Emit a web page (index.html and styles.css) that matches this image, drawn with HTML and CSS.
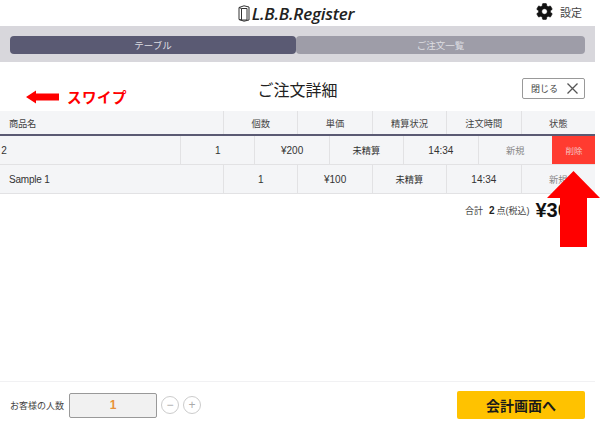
FILE: index.html
```html
<!DOCTYPE html>
<html lang="ja">

<head>
    <meta charset="UTF-8">
    <meta name="viewport" content="width=device-width, initial-scale=1.0">
    <title>ご注文詳細</title>
    <link rel="stylesheet" href="styles.css">
</head>

<body>
    <div class="page">
        <header class="top-bar">
            <div class="logo">
                <svg class="logo-icon" width="12" height="17" viewBox="0 0 12 17" fill="none" stroke="#333" stroke-width="1">
                    <path d="M1 2.5 L6 0.8 L11 2 V15 L6 16.2 L1 14.5 Z" />
                    <path d="M3.5 3.5 H9 V15 H3.5 Z" />
                    <path d="M1 2.5 L3.5 3.5 M1 14.5 L3.5 15" />
                </svg>
                <span>L.B.B.Register</span>
            </div>
            <div class="settings">
                <svg width="19" height="19" viewBox="0 0 24 24" fill="#111" stroke="#111" stroke-width="0.8">
                    <path d="M19.43 12.98c.04-.32.07-.64.07-.98s-.03-.66-.07-.98l2.11-1.65c.19-.15.24-.42.12-.64l-2-3.46c-.12-.22-.39-.3-.61-.22l-2.49 1c-.52-.4-1.08-.73-1.69-.98l-.38-2.65C14.46 2.18 14.25 2 14 2h-4c-.25 0-.46.18-.49.42l-.38 2.65c-.61.25-1.17.59-1.69.98l-2.49-1c-.23-.09-.49 0-.61.22l-2 3.46c-.13.22-.07.49.12.64l2.11 1.65c-.04.32-.07.65-.07.98s.03.66.07.98l-2.11 1.65c-.19.15-.24.42-.12.64l2 3.46c.12.22.39.3.61.22l2.49-1c.52.4 1.08.73 1.69.98l.38 2.65c.03.24.24.42.49.42h4c.25 0 .46-.18.49-.42l.38-2.65c.61-.25 1.17-.59 1.69-.98l2.49 1c.23.09.49 0 .61-.22l2-3.46c.12-.22.07-.49-.12-.64l-2.11-1.65zM12 15.5c-1.93 0-3.5-1.57-3.5-3.5s1.57-3.5 3.5-3.5 3.5 1.57 3.5 3.5-1.57 3.5-3.5 3.5z" />
                </svg>
                <span>設定</span>
            </div>
        </header>

        <nav class="tabs">
            <div class="tab tab-active">テーブル</div>
            <div class="tab">ご注文一覧</div>
        </nav>

        <section class="detail-head">
            <h1 class="detail-title">ご注文詳細</h1>
            <button class="close-btn">
                <span>閉じる</span>
                <svg width="11" height="11" viewBox="0 0 11 11" stroke="#555" stroke-width="1.3" fill="none">
                    <path d="M0.5 0.5 L10.5 10.5 M10.5 0.5 L0.5 10.5" />
                </svg>
            </button>
        </section>

        <div class="order-table">
            <div class="row row-head">
                <div class="cell cell-name">商品名</div>
                <div class="cell">個数</div>
                <div class="cell">単価</div>
                <div class="cell">精算状況</div>
                <div class="cell">注文時間</div>
                <div class="cell">状態</div>
            </div>
            <div class="row row-swiped">
                <div class="cell cell-name">Sample 2</div>
                <div class="cell">1</div>
                <div class="cell">¥200</div>
                <div class="cell cell-ja">未精算</div>
                <div class="cell">14:34</div>
                <div class="cell cell-ja cell-status">新規</div>
                <div class="cell cell-delete">削除</div>
            </div>
            <div class="row">
                <div class="cell cell-name">Sample 1</div>
                <div class="cell">1</div>
                <div class="cell">¥100</div>
                <div class="cell cell-ja">未精算</div>
                <div class="cell">14:34</div>
                <div class="cell cell-ja cell-status">新規</div>
            </div>
        </div>

        <div class="total">
            <span class="total-label">合計</span>
            <b class="total-count">2</b>
            <span class="total-label">点(税込)</span>
            <b class="total-price">¥300</b>
        </div>

        <footer class="bottom-bar">
            <div class="guests">
                <span class="guests-label">お客様の人数</span>
                <div class="guests-input">1</div>
                <button class="round-btn">−</button>
                <button class="round-btn">+</button>
            </div>
            <button class="pay-btn">会計画面へ</button>
        </footer>
    </div>

    <!-- 注釈 -->
    <div class="swipe-note">
        <svg width="33" height="14" viewBox="0 0 33 14" fill="#f00">
            <path d="M0 7 L10 0.5 V3.5 H33 V10.5 H10 V13.5 Z" />
        </svg>
        <span>スワイプ</span>
    </div>
    <svg class="up-arrow" width="53" height="77" viewBox="0 0 53 77" fill="#f00">
        <path d="M26.5 0 L53 27 H40 V76 H13 V27 H0 Z" />
    </svg>
</body>

</html>
```

FILE: styles.css
```css
html,
body {
    margin: 0;
    padding: 0;
    height: 100%;
    background: #fff;
    overflow: hidden;
    font-family: "Liberation Sans", "Noto Sans CJK JP", sans-serif;
    color: #333;
}

.page {
    width: 595px;
    height: 428px;
    display: flex;
    flex-direction: column;
    overflow: hidden;
}

.top-bar {
    height: 26px;
    display: flex;
    justify-content: center;
    align-items: center;
    position: relative;
}

.logo {
    display: flex;
    align-items: center;
    gap: 2px;
    margin-left: -3px;
    font-family: "Open Sans", sans-serif;
    font-style: italic;
    font-weight: 600;
    font-size: 17px;
    letter-spacing: -0.2px;
    color: #222;
}

.settings {
    position: absolute;
    right: 13px;
    top: 2px;
    display: flex;
    align-items: center;
    gap: 6px;
    font-size: 11px;
    color: #444;
}

.tabs {
    height: 36px;
    box-sizing: border-box;
    padding: 10px 10px 8px;
    display: flex;
    background: #d8d7dc;
}

.tab {
    flex: 1;
    display: flex;
    justify-content: center;
    align-items: center;
    border-radius: 4px;
    background: #9e9da8;
    color: #dddde2;
    font-size: 9.5px;
}

.tab-active {
    flex: none;
    width: 286px;
    background: #5a5a73;
}

.detail-head {
    height: 49px;
    display: flex;
    justify-content: center;
    align-items: center;
    position: relative;
}

.detail-title {
    margin: 4px 0 0;
    font-size: 16px;
    font-weight: 400;
    color: #222;
}

.close-btn {
    position: absolute;
    right: 10px;
    top: 16px;
    width: 63px;
    height: 21px;
    box-sizing: border-box;
    padding: 0 6px 0 8px;
    display: flex;
    justify-content: space-between;
    align-items: center;
    border: 1px solid #999;
    border-radius: 2px;
    background: #fff;
    font-family: inherit;
    font-size: 9px;
    color: #444;
}

.row {
    display: flex;
    height: 29px;
    box-sizing: border-box;
    background: #f4f5f7;
    border-bottom: 1px solid #e2e2e4;
}

.row-head {
    height: 25px;
    border-bottom: 2px solid #5a5a73;
}

.row-swiped {
    margin-left: -43px;
    width: 638px;
}

.cell {
    width: 74.4px;
    flex: none;
    box-sizing: border-box;
    display: flex;
    justify-content: center;
    align-items: center;
    border-left: 1px solid #e2e2e4;
    font-size: 10px;
    color: #333;
}

.row-head .cell,
.cell-ja {
    font-size: 9.25px;
}

.row-head .cell {
    color: #444;
}

.cell-name {
    width: 223px;
    justify-content: flex-start;
    padding-left: 9px;
    border-left: none;
    letter-spacing: -0.2px;
}

.cell-status {
    color: #888;
}

.cell-delete {
    width: 44px;
    background: #ff3b30;
    border-left: none;
    color: #f5c5c0;
    font-size: 8.5px;
}

.total {
    height: 33px;
    padding-right: 15px;
    display: flex;
    justify-content: flex-end;
    align-items: center;
    white-space: nowrap;
}

.total-label {
    font-size: 9px;
    color: #444;
}

.total-count {
    margin: 0 2px 0 6px;
    font-size: 10px;
    color: #222;
}

.total-price {
    margin-left: 6px;
    font-size: 20px;
    color: #111;
}

.bottom-bar {
    margin-top: auto;
    height: 47px;
    box-sizing: border-box;
    padding: 0 10px;
    display: flex;
    justify-content: space-between;
    align-items: center;
    border-top: 1px solid #f1f1f3;
}

.guests {
    display: flex;
    align-items: center;
}

.guests-label {
    font-size: 9px;
    color: #444;
    white-space: nowrap;
}

.guests-input {
    width: 88px;
    height: 25px;
    box-sizing: border-box;
    margin: 0 4px 0 5px;
    display: flex;
    justify-content: center;
    align-items: center;
    border: 1px solid #999;
    border-radius: 2px;
    background: #f1f1f1;
    color: #e8923a;
    font-size: 12px;
    font-weight: 700;
}

.round-btn {
    width: 18px;
    height: 18px;
    margin-right: 4px;
    padding: 0;
    border: 1px solid #ccc;
    border-radius: 50%;
    background: #fff;
    color: #aaa;
    font-family: inherit;
    font-size: 12px;
    line-height: 14px;
}

.pay-btn {
    width: 128px;
    height: 28px;
    border: none;
    border-radius: 2px;
    background: #ffc200;
    color: #1a1a1a;
    font-family: inherit;
    font-size: 14px;
    font-weight: 700;
}

.swipe-note {
    position: absolute;
    left: 26px;
    top: 86px;
    display: flex;
    align-items: center;
    gap: 8px;
    color: #f00;
    font-size: 14.5px;
    font-weight: 700;
    letter-spacing: 0.5px;
}

.up-arrow {
    position: absolute;
    left: 547px;
    top: 171px;
}
```
